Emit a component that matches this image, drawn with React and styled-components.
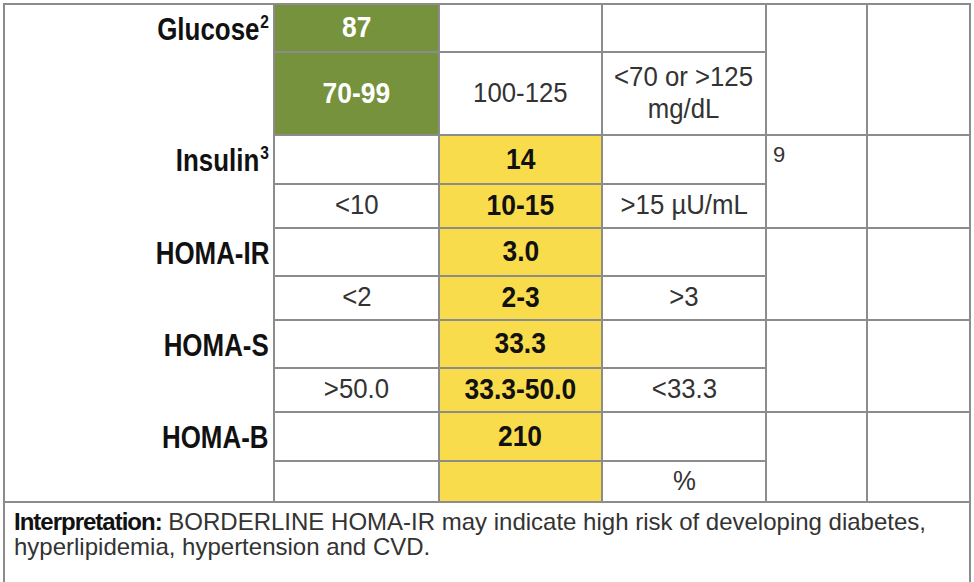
import { Fragment } from 'react'
import styled, { createGlobalStyle } from 'styled-components'

const GlobalStyle = createGlobalStyle`
    html, body {
        margin: 0;
        padding: 0;
        background: #ffffff;
        overflow: hidden;
    }
    body {
        font-family: "Liberation Sans", Arial, sans-serif;
    }
`;

const Page = styled.div`
    width: 974px;
    height: 582px;
    overflow: hidden;
    padding: 3px 0 0 3px;
    box-sizing: border-box;
`;

const Table = styled.table`
    border-collapse: collapse;
    table-layout: fixed;
    width: 966px;
    border: 2px solid #8c8c8c;
`;

const Col = styled.col`
    width: ${props => props.w}px;
`;

const Row = styled.tr`
    height: ${props => props.h}px;
`;

// the reference uses a condensed face, so squeeze Liberation Sans sideways
const Squeeze = styled.span`
    display: inline-block;
    white-space: nowrap;
    transform: scaleX(${props => props.x});
    transform-origin: ${props => props.origin || 'center'};
`;

const Sup = styled.span`
    font-size: 0.6em;
    vertical-align: 0.6em;
    line-height: 0;
    margin-left: 1px;
`;

const Label = styled.td`
    border-left: 2px solid #8c8c8c;
    border-right: 2px solid #8c8c8c;
    text-align: right;
    vertical-align: middle;
    padding: 2px 4px 0 0;
    font-size: 32px;
    font-weight: bold;
    color: #111111;
`;

const Cell = styled.td`
    border: 2px solid #8c8c8c;
    text-align: center;
    vertical-align: middle;
    padding: 0 2px 2px;
    font-size: ${props => (props.bold ? 30 : 28)}px;
    font-weight: ${props => (props.bold ? 'bold' : 'normal')};
    line-height: 32px;
    color: ${props => (props.tone === 'green' ? '#ffffff' : props.bold ? '#111111' : '#333333')};
    background: ${props =>
        props.tone === 'green' ? '#76923c' : props.tone === 'yellow' ? '#f9dc4c' : '#ffffff'};
`;

const NoteCell = styled.td`
    border: 2px solid #8c8c8c;
    vertical-align: top;
    text-align: left;
    padding: 6px 0 0 6px;
    font-size: 22px;
    color: #333333;
`;

const Interpretation = styled.td`
    border: 2px solid #8c8c8c;
    vertical-align: top;
    padding: 6px 6px 0 9px;
    font-size: 24px;
    line-height: 25px;
    color: #333333;
    height: 90px;
    white-space: nowrap;

    strong {
        letter-spacing: -1px;
        color: #111111;
    }
`;

const groups = [
    {
        label: 'Glucose',
        sup: '2',
        heights: [48, 83],
        top: [
            { text: '87', tone: 'green', bold: true },
            { text: '' },
            { text: '' },
        ],
        bottom: [
            { text: '70-99', tone: 'green', bold: true },
            { text: '100-125' },
            { text: <>&lt;70 or &gt;125<br />mg/dL</> },
        ],
        note: '',
    },
    {
        label: 'Insulin',
        sup: '3',
        heights: [49, 44],
        top: [{ text: '' }, { text: '14', tone: 'yellow', bold: true }, { text: '' }],
        bottom: [
            { text: '<10' },
            { text: '10-15', tone: 'yellow', bold: true },
            { text: '>15 µU/mL' },
        ],
        note: '9',
    },
    {
        label: 'HOMA-IR',
        heights: [48, 44],
        top: [{ text: '' }, { text: '3.0', tone: 'yellow', bold: true }, { text: '' }],
        bottom: [
            { text: '<2' },
            { text: '2-3', tone: 'yellow', bold: true },
            { text: '>3' },
        ],
        note: '',
    },
    {
        label: 'HOMA-S',
        heights: [48, 44],
        top: [{ text: '' }, { text: '33.3', tone: 'yellow', bold: true }, { text: '' }],
        bottom: [
            { text: '>50.0' },
            { text: '33.3-50.0', tone: 'yellow', bold: true },
            { text: '<33.3' },
        ],
        note: '',
    },
    {
        label: 'HOMA-B',
        heights: [49, 41],
        top: [{ text: '' }, { text: '210', tone: 'yellow', bold: true }, { text: '' }],
        bottom: [
            { text: '' },
            { text: '', tone: 'yellow' },
            { text: '%' },
        ],
        note: '',
    },
];

function Values({ cells }) {
    return cells.map((c, i) => (
        <Cell key={i} tone={c.tone} bold={c.bold}>
            {c.text ? <Squeeze x={c.bold ? 0.88 : 0.92}>{c.text}</Squeeze> : null}
        </Cell>
    ))
}

export default function App() {
    return (
        <Page>
            <GlobalStyle />
            <Table>
                <colgroup>
                    <Col w={270} />
                    <Col w={165} />
                    <Col w={163} />
                    <Col w={164} />
                    <Col w={101} />
                    <Col w={103} />
                </colgroup>
                <tbody>
                    {groups.map(group => (
                        <Fragment key={group.label}>
                            <Row h={group.heights[0]}>
                                <Label>
                                    <Squeeze x={0.81} origin="right">
                                        {group.label}
                                        {group.sup && <Sup>{group.sup}</Sup>}
                                    </Squeeze>
                                </Label>
                                <Values cells={group.top} />
                                <NoteCell rowSpan={2}>{group.note}</NoteCell>
                                <NoteCell rowSpan={2}></NoteCell>
                            </Row>
                            <Row h={group.heights[1]}>
                                <Label></Label>
                                <Values cells={group.bottom} />
                            </Row>
                        </Fragment>
                    ))}
                    <tr>
                        <Interpretation colSpan={6}>
                            <strong>Interpretation:</strong> BORDERLINE HOMA-IR may indicate high risk of developing diabetes,
                            <br />
                            hyperlipidemia, hypertension and CVD.
                        </Interpretation>
                    </tr>
                </tbody>
            </Table>
        </Page>
    )
}
